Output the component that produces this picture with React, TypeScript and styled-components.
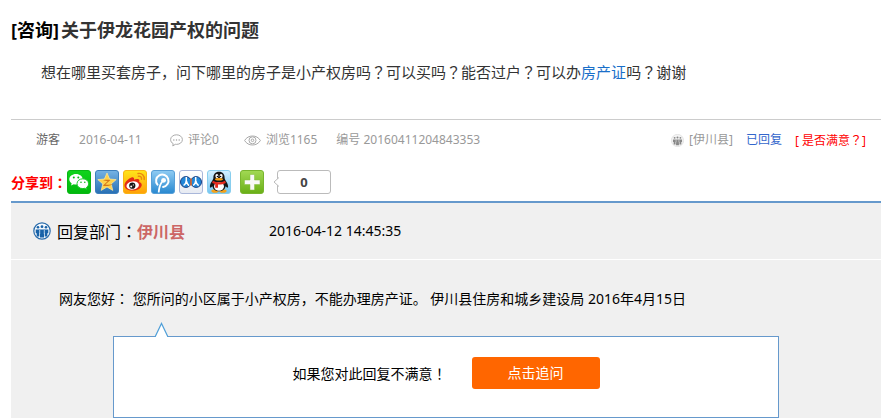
import React from "react";
import styled, { createGlobalStyle } from "styled-components";

const GlobalStyle = createGlobalStyle`
  * { box-sizing: border-box; }
  body {
    margin: 0;
    background: #fff;
    color: #000;
    font: 14px/20px "Noto Sans", "Noto Sans CJK SC", sans-serif;
  }
  h1, p { margin: 0; }
  a { text-decoration: none; }
  svg { display: block; flex: none; }
`;

const Page = styled.main`
  padding: 0 9px 0 11px;
`;

const Title = styled.h1`
  padding-top: 18px;
  font-size: 18px;
  line-height: 24px;
  color: #333;
`;

const Category = styled.span`
  margin-right: 2px;
  color: #000;
`;

const Question = styled.p`
  padding: 18px 30px 35px;
  font-size: 15px;
  line-height: 24px;
  color: #333;
`;

const Keyword = styled.a`
  color: #1a6fc9;
`;

/* Full-width marks that sit in the middle of their cell. */
const Mark = styled.span`
  font-family: "Noto Sans CJK TC", sans-serif;
`;

const MetaBar = styled.div`
  display: flex;
  justify-content: space-between;
  align-items: center;
  height: 41px;
  padding: 0 15px 0 25px;
  border-top: 1px solid #ccc;
  font-size: 12px;
  color: #999;
  white-space: nowrap;
`;

const MetaGroup = styled.div<{ $gap: number }>`
  display: flex;
  align-items: center;
  gap: ${(p) => p.$gap}px;
`;

const MetaItem = styled.span<{ $color?: string; $minWidth?: number }>`
  display: flex;
  align-items: center;
  gap: 5px;
  min-width: ${(p) => p.$minWidth ?? 0}px;
  color: ${(p) => p.$color ?? "inherit"};
`;

const StatusLink = styled.a<{ $color: string }>`
  color: ${(p) => p.$color};
`;

const ShareBar = styled.div`
  display: flex;
  align-items: center;
  height: 41px;
  padding-top: 3px;
`;

const ShareLabel = styled.span`
  width: 56px;
  font-size: 14px;
  font-weight: bold;
  color: #f00;
  white-space: nowrap;
`;

const ShareList = styled.div`
  display: flex;
  gap: 4px;
`;

const ShareButton = styled.button<{ $spaced?: boolean }>`
  width: 24px;
  height: 24px;
  margin-left: ${(p) => (p.$spaced ? 5 : 0)}px;
  padding: 0;
  border: 0;
  background: none;
  cursor: pointer;
`;

const ShareCount = styled.span`
  position: relative;
  width: 54px;
  height: 24px;
  margin-left: 13px;
  border: 1px solid #bbb;
  border-radius: 3px;
  font-size: 13px;
  font-weight: bold;
  line-height: 22px;
  text-align: center;
  color: #444;
`;

const CountArrow = styled.svg`
  position: absolute;
  left: -5px;
  top: 6px;
`;

const Reply = styled.section`
  border-top: 2px solid #69c;
  background: #f0f0f0;
`;

const ReplyHeader = styled.header`
  display: flex;
  align-items: center;
  height: 57px;
  padding-left: 22px;
  border-bottom: 1px solid #fff;
`;

const Department = styled.div`
  width: 212px;
  margin-left: 6px;
  font-size: 16px;
  white-space: nowrap;
`;

const DepartmentName = styled.strong`
  color: #c66;
`;

const ReplyText = styled.p`
  padding: 28px 48px 27px;
  white-space: pre-wrap;
`;

const FollowUp = styled.div`
  position: relative;
  display: flex;
  justify-content: center;
  align-items: center;
  gap: 25px;
  height: 82px;
  margin: 0 102px;
  padding-bottom: 8px;
  border: 1px solid #69c;
  background: #fff;
`;

const FollowUpArrow = styled.svg`
  position: absolute;
  left: 40px;
  top: -15px;
`;

const AskButton = styled.button`
  width: 128px;
  height: 32px;
  padding: 0;
  border: 0;
  border-radius: 3px;
  background: #f60;
  color: #fff;
  font: inherit;
  cursor: pointer;
`;

const CommentIcon = () => (
  <svg width="13" height="13" viewBox="0 0 13 13" fill="none" stroke="#aaa">
    <path d="M6.5.8C3.2.8.6 2.9.6 5.6c0 1.8 1 3.2 2.6 4.1L2.8 12l2.5-1.7c.4.1.8.1 1.2.1 3.3 0 5.9-2.1 5.9-4.8S9.8.8 6.5.8Z" />
    <path d="M3.2 6h1.2M5.9 6h1.2M8.6 6h1.2" stroke="#888" strokeWidth="1.2" />
  </svg>
);

const EyeIcon = () => (
  <svg width="17" height="11" viewBox="0 0 17 11" fill="none" stroke="#aaa">
    <path d="M.6 5.5C2.4 2.5 5.2 1 8.5 1s6.1 1.5 7.9 4.500C14.6 8.5 11.8 10 8.5 10S2.4 8.5.6 5.500Z" />
    <circle cx="8.5" cy="5.3" r="3.5" />
    <circle cx="8.5" cy="5.3" r="1.3" />
  </svg>
);

const PeopleShapes = () => (
  <>
    <circle cx="5" cy="5.3" r="1.3" />
    <circle cx="9" cy="4.7" r="1.4" />
    <circle cx="13" cy="5.3" r="1.3" />
    <path d="M2.7 7.5h12.6v3.7h-1v3.3h-2.6v-3.3h-.7v4.3H7v-4.3h-.7v3.3H3.7v-3.3h-1Z" />
  </>
);

const SmallPeopleIcon = () => (
  <svg width="13" height="13" viewBox="0 0 18 18">
    <circle cx="9" cy="9" r="8.5" fill="#f4f4f4" stroke="#ddd" />
    <g fill="#888">
      <PeopleShapes />
    </g>
    <path d="M7 7.5v4M11 7.5v4" stroke="#eee" strokeWidth="0.8" />
  </svg>
);

const DepartmentIcon = () => (
  <svg width="18" height="18" viewBox="0 0 18 18">
    <circle cx="9" cy="9" r="8.2" fill="#f5f9fd" stroke="#2a6cab" strokeWidth="1.2" />
    <g fill="#1862a8">
      <PeopleShapes />
    </g>
    <path d="M6.7 8v4M11.3 8v4" stroke="#d8e8f6" strokeWidth="0.8" />
  </svg>
);

const Gradient = ({ id, from, to }: { id: string; from: string; to: string }) => (
  <defs>
    <linearGradient id={id} x1="0" y1="0" x2="0" y2="1">
      <stop offset="0" stopColor={from} />
      <stop offset="1" stopColor={to} />
    </linearGradient>
  </defs>
);

const Tile = ({ id, from, to, edge }: { id: string; from: string; to: string; edge: string }) => (
  <>
    <Gradient id={id} from={from} to={to} />
    <rect x=".5" y=".5" width="23" height="23" rx="2.5" fill={`url(#${id})`} stroke={edge} />
  </>
);

const WeChatIcon = () => (
  <svg width="24" height="24" viewBox="0 0 24 24">
    <Tile id="wechat" from="#10d41c" to="#00b80c" edge="#09b715" />
    <path d="M9 4C5.2 4 2.3 6.3 2.3 9.3c0 1.7.9 3.1 2.4 4.1L4 15.6l2.7-1.3c.8.2 1.5.3 2.3.3 3.8 0 6.7-2.3 6.7-5.3S12.8 4 9 4Z" fill="#fff" />
    <path d="M15.8 8.8c-3.3 0-5.8 2.1-5.8 4.9s2.5 4.9 5.8 4.9c.7 0 1.3-.1 1.9-.3l2.3 1.2-.6-2c1.4-.9 2.2-2.2 2.2-3.8 0-2.8-2.5-4.9-5.8-4.9Z" fill="#fff" stroke="#08c414" strokeWidth=".9" />
    <g fill="#08b814">
      <circle cx="6.8" cy="7.6" r="1" />
      <circle cx="11.3" cy="7.6" r="1" />
      <circle cx="14" cy="12.3" r=".8" />
      <circle cx="17.8" cy="12.3" r=".8" />
    </g>
  </svg>
);

const QzoneIcon = () => (
  <svg width="24" height="24" viewBox="0 0 24 24">
    <Tile id="qzone" from="#76b3e4" to="#276fb4" edge="#3c7fbd" />
    <path d="m12 3 2.6 6 6.6.6-5 4.3 1.6 6.5L12 17l-5.8 3.4 1.6-6.5-5-4.3 6.6-.6Z" fill="#ffd24a" stroke="#ffeaa0" strokeWidth=".7" strokeLinejoin="round" />
    <path d="M8 10.3c3-.7 5.3-.6 7.5-.2l-5.2 4.3c2.7.6 5 .5 8-.4-3.5 2.2-7 2.5-10.5 1.7l4.8-4.4c-1.5-.5-3-.8-4.6-1Z" fill="#d67718" />
  </svg>
);

const WeiboIcon = () => (
  <svg width="24" height="24" viewBox="0 0 24 24">
    <Tile id="weibo" from="#ffe51a" to="#ff9f08" edge="#f8b516" />
    <path d="M8.5 7.5c1.7-.8 3 .2 2.5 2.3 2-.9 4.8-1.2 5.3.3.2.7 0 1.3-.2 1.9 1.8.6 2.9 1.7 2.6 3.4-.6 3-4.5 5.2-9.3 5.2-4.6 0-7.900-2.1-7.900-5.200 0-3 3.800-6.900 7-7.900Z" fill="#e22b17" />
    <ellipse cx="9.7" cy="15.5" rx="6.3" ry="4.1" fill="#fff" transform="rotate(-7 9.7 15.5)" />
    <circle cx="9.3" cy="15.7" r="3.1" fill="#151515" />
    <circle cx="8.2" cy="16.5" r="1" fill="#fff" />
    <circle cx="10.3" cy="14.9" r=".6" fill="#fff" />
    <path d="M15 3.5c3.8-.8 6.700 2 6.200 6M15.400 6.300c2-.4 3.400.9 3.100 2.900" fill="none" stroke="#e98610" strokeWidth="1.4" strokeLinecap="round" />
  </svg>
);

const TencentWeiboIcon = () => (
  <svg width="24" height="24" viewBox="0 0 24 24">
    <Tile id="tweibo" from="#90ccf3" to="#2888d0" edge="#579fd7" />
    <path d="M6.5 14.7a6.2 6.2 0 1 1 5.6 2.2" fill="none" stroke="#fff" strokeWidth="2" strokeLinecap="round" />
    <circle cx="12.6" cy="10.3" r="2.4" fill="#fff" />
    <path d="M11.3 11.5C9.2 14 8 17.5 7.7 22.5" fill="none" stroke="#fff" strokeWidth="1.8" />
  </svg>
);

const PengyouIcon = () => (
  <svg width="24" height="24" viewBox="0 0 24 24">
    <Tile id="pengyou" from="#ffffff" to="#e6eaf2" edge="#a9b7da" />
    <circle cx="6.9" cy="12" r="5.4" fill="#2187d8" stroke="#173f83" />
    <circle cx="17.1" cy="12" r="5.4" fill="#2187d8" stroke="#173f83" />
    <path d="M7.3 7v3.5c0 2-.9 3.7-2.700 5M7.500 11c.3 2 1.100 3.500 2.500 4.700M16.700 7v3.500c0 2-.9 3.700-2.500 5M16.900 11c.3 2 1.100 3.500 2.700 4.700" fill="none" stroke="#fff" strokeWidth="1.5" />
    <path d="M12 8.5v7" stroke="#f06a22" strokeWidth="1.5" />
  </svg>
);

const QQIcon = () => (
  <svg width="24" height="24" viewBox="0 0 24 24">
    <Tile id="qq" from="#d5f1ff" to="#72c4f1" edge="#88ceee" />
    <ellipse cx="8" cy="21" rx="3.6" ry="1.8" fill="#f5a219" />
    <ellipse cx="16" cy="21" rx="3.6" ry="1.8" fill="#f5a219" />
    <path d="M12 1.7c-3.7 0-5.8 2.5-5.6 6.3-.1 2-3.5 5-3.5 8.6 0 1.6 1.2 1.3 2.4-.4.8 3.4 3.2 5 6.7 5s5.9-1.6 6.7-5c1.2 1.7 2.4 2 2.4.4 0-3.6-3.4-6.6-3.5-8.6.2-3.8-1.9-6.3-5.6-6.3Z" fill="#161616" />
    <ellipse cx="12" cy="16.5" rx="5" ry="4.2" fill="#fff" />
    <ellipse cx="9.9" cy="6.1" rx="1.5" ry="2.1" fill="#fff" />
    <ellipse cx="14.1" cy="6.1" rx="1.5" ry="2.1" fill="#fff" />
    <circle cx="10.4" cy="6.4" r=".7" />
    <circle cx="13.6" cy="6.4" r=".7" />
    <ellipse cx="12" cy="9.3" rx="4" ry="1.2" fill="#f5a219" />
    <path d="M5.8 10.7c4 2 8.4 2 12.4 0l.6 2.3c-2.7 1.3-5.2 1.7-7.8 1.5v3.3H8.200v-3.700L5.200 13Z" fill="#e52b1e" />
  </svg>
);

const MoreIcon = () => (
  <svg width="24" height="24" viewBox="0 0 24 24">
    <Tile id="more" from="#a2d954" to="#69af16" edge="#78b52e" />
    <path d="M10 4.5h4.5V10H20v4.5h-5.500V20H10v-5.500H4.500V10H10Z" fill="#f8f8f8" stroke="#84bd3e" strokeWidth=".5" />
  </svg>
);

const services = [
  { label: "微信", Icon: WeChatIcon },
  { label: "QQ空间", Icon: QzoneIcon },
  { label: "新浪微博", Icon: WeiboIcon },
  { label: "腾讯微博", Icon: TencentWeiboIcon },
  { label: "朋友网", Icon: PengyouIcon },
  { label: "QQ好友", Icon: QQIcon },
  { label: "更多", Icon: MoreIcon, spaced: true },
];

const Marked = ({ children }: { children: string }) => (
  <>
    {children.split(/([？！：])/).map((part, i) =>
      i % 2 ? <Mark key={i}>{part}</Mark> : part
    )}
  </>
);

export default function App() {
  return (
    <>
      <GlobalStyle />
      <Page>
        <Title>
          <Category>[咨询]</Category>关于伊龙花园产权的问题
        </Title>
        <Question>
          <Marked>想在哪里买套房子，问下哪里的房子是小产权房吗？可以买吗？能否过户？可以办</Marked>
          <Keyword href="#">房产证</Keyword>
          <Marked>吗？谢谢</Marked>
        </Question>
        <MetaBar>
          <MetaGroup $gap={25}>
            <MetaGroup $gap={19}>
              <MetaItem $color="#666">游客</MetaItem>
              <MetaItem $minWidth={66}>2016-04-11</MetaItem>
            </MetaGroup>
            <MetaItem>
              <CommentIcon />
              评论0
            </MetaItem>
            <MetaGroup $gap={19}>
              <MetaItem>
                <EyeIcon />
                浏览1165
              </MetaItem>
              <MetaItem>编号 20160411204843353</MetaItem>
            </MetaGroup>
          </MetaGroup>
          <MetaGroup $gap={13}>
            <MetaItem>
              <SmallPeopleIcon />
              [伊川县]
            </MetaItem>
            <StatusLink href="#" $color="#36c">已回复</StatusLink>
            <StatusLink href="#" $color="#f00">
              <Marked>[ 是否满意？]</Marked>
            </StatusLink>
          </MetaGroup>
        </MetaBar>
        <ShareBar>
          <ShareLabel>
            <Marked>分享到：</Marked>
          </ShareLabel>
          <ShareList>
            {services.map(({ label, Icon, spaced }) => (
              <ShareButton key={label} type="button" aria-label={label} $spaced={spaced}>
                <Icon />
              </ShareButton>
            ))}
          </ShareList>
          <ShareCount>
            <CountArrow width="6" height="10" viewBox="0 0 6 10">
              <path d="M6 .5 1 5l5 4.5" fill="#fff" stroke="#bbb" />
            </CountArrow>
            0
          </ShareCount>
        </ShareBar>
        <Reply>
          <ReplyHeader>
            <DepartmentIcon />
            <Department>
              <Marked>回复部门：</Marked>
              <DepartmentName>伊川县</DepartmentName>
            </Department>
            <time dateTime="2016-04-12T14:45:35">2016-04-12 14:45:35</time>
          </ReplyHeader>
          <ReplyText>
            <Marked>网友您好： 您所问的小区属于小产权房，不能办理房产证。 伊川县住房和城乡建设局 2016年4月15日</Marked>
          </ReplyText>
          <FollowUp>
            <FollowUpArrow width="15" height="15" viewBox="0 0 15 15">
              <path d="M1 15 7.5 1.5 14 15" fill="#fff" stroke="#4f9fd8" strokeWidth="1.2" />
            </FollowUpArrow>
            <span>
              <Marked>如果您对此回复不满意！</Marked>
            </span>
            <AskButton type="button">点击追问</AskButton>
          </FollowUp>
        </Reply>
      </Page>
    </>
  );
}
